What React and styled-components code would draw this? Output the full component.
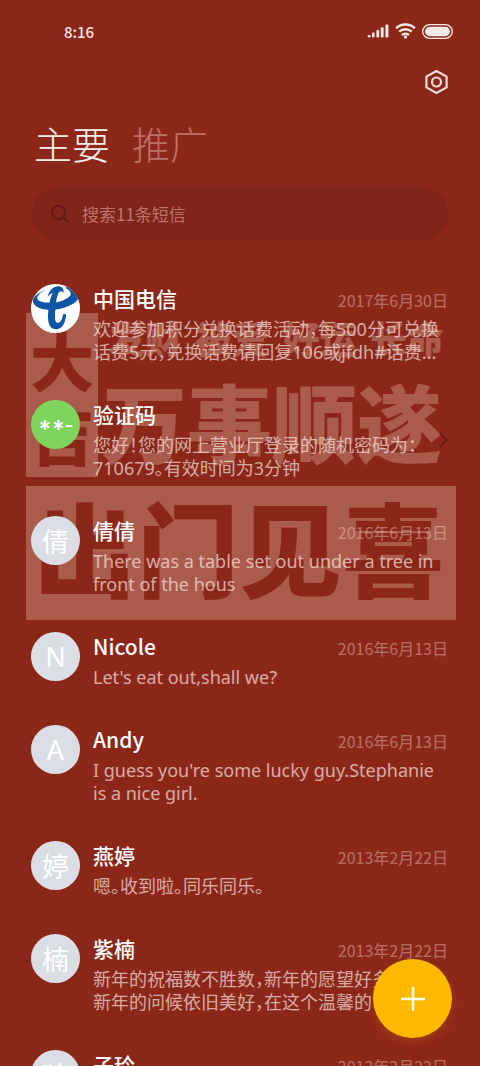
import styled, { createGlobalStyle } from "styled-components";

const GlobalStyle = createGlobalStyle`
  * {
    box-sizing: border-box;
  }
  body {
    margin: 0;
    background: #8b2719;
    color: #fff;
    font-family: "Noto Sans CJK SC", sans-serif;
    font-feature-settings: "halt";
  }
  button {
    padding: 0;
    border: 0;
    background: none;
    color: inherit;
    font: inherit;
    cursor: pointer;
  }
`;

const Page = styled.div`
  position: relative;
  height: 100vh;
  overflow: hidden;
`;

const StatusBar = styled.header`
  display: flex;
  align-items: center;
  justify-content: space-between;
  height: 62px;
  padding: 0 27px 0 64px;
  color: #f8e9e6;
`;

const Clock = styled.time`
  font-size: 15px;
  font-weight: 500;
`;

const StatusIcons = styled.div`
  display: flex;
  align-items: center;
  gap: 6px;
`;

const Toolbar = styled.div`
  display: flex;
  justify-content: flex-end;
  padding: 7px 31px 0;
`;

const IconButton = styled.button`
  display: flex;
`;

const Tabs = styled.nav`
  display: flex;
  gap: 22px;
  height: 92px;
  padding: 20px 34px 0;
`;

const Tab = styled.button`
  height: 56px;
  font-size: 38px;
  font-weight: 300;
  line-height: 56px;
  color: ${(props) => (props.$active ? "#fbeeeb" : "#bd7268")};
`;

const SearchBox = styled.label`
  display: flex;
  align-items: center;
  gap: 12px;
  height: 53px;
  margin: 0 32px;
  padding: 0 18px;
  border-radius: 27px;
  background: #802318;
`;

const SearchInput = styled.input`
  flex: 1;
  min-width: 0;
  padding: 0;
  border: 0;
  outline: 0;
  background: none;
  color: #fff;
  font: inherit;
  font-size: 17px;

  &::placeholder {
    color: #bb766c;
    opacity: 1;
  }
`;

const Body = styled.main`
  position: relative;
  padding-top: 44px;
`;

const Wallpaper = styled.div`
  position: absolute;
  top: 73px;
  left: 26px;
  right: 24px;
  display: grid;
  grid-template-columns: 72px 1fr;
  row-gap: 9px;
  color: #ab5b4b;
  font-weight: 900;
  user-select: none;
`;

const Seal = styled.div`
  display: flex;
  flex-direction: column;
  justify-content: center;
  height: 164px;
  background: #ab5b4b;
  color: #8b2719;
  font-size: 64px;
  line-height: 74px;
  text-align: center;
`;

const Wishes = styled.div`
  padding: 0 12px 0 4px;
`;

const SmallWish = styled.div`
  display: flex;
  justify-content: space-between;
  padding-left: 6px;
  font-size: 37px;
  line-height: 50px;
`;

const BigWish = styled.div`
  display: flex;
  justify-content: space-between;
  height: 114px;
  font-size: 85px;
  line-height: 114px;
  white-space: nowrap;
`;

const Banner = styled.div`
  grid-column: 1 / 3;
  display: flex;
  justify-content: space-between;
  height: 134px;
  padding: 0 12px 0 8px;
  background: #ab5b4b;
  color: #8b2719;
  font-size: 102px;
  line-height: 120px;
`;

const List = styled.ul`
  position: relative;
  margin: 0;
  padding: 0 32px 0 31px;
  list-style: none;
`;

const Row = styled.li`
  display: flex;
  gap: 13px;
  padding-bottom: 36px;
`;

const Avatar = styled.div`
  display: flex;
  align-items: center;
  justify-content: center;
  flex: none;
  width: 49px;
  height: 49px;
  border-radius: 50%;
  overflow: hidden;
  background: ${(props) => props.$color || "#dbdfe5"};
  font-family: "Noto Sans", "Noto Sans CJK SC", sans-serif;
  font-size: 27px;
`;

const Mask = styled.span`
  font-family: "DejaVu Sans", sans-serif;
  font-size: 16px;
  font-weight: 700;
`;

const Content = styled.div`
  flex: 1;
  min-width: 0;
`;

const RowHead = styled.div`
  display: flex;
  align-items: flex-start;
  justify-content: space-between;
  height: 30px;
  margin-bottom: 4px;
`;

const Name = styled.h2`
  margin: 0;
  font-size: 21px;
  font-weight: 500;
  line-height: 28px;
`;

const DateText = styled.time`
  color: rgba(255, 228, 224, 0.4);
  font-size: 16px;
  line-height: 32px;
`;

const Preview = styled.p`
  margin: 0;
  color: rgba(255, 238, 234, 0.68);
  font-family: "Noto Sans", "Noto Sans CJK SC", sans-serif;
  font-size: 18px;
  line-height: 23px;
  white-space: pre;
`;

const Chevron = styled.svg`
  flex: none;
  align-self: center;
`;

const AddButton = styled.button`
  position: fixed;
  right: 28px;
  bottom: 28px;
  display: flex;
  align-items: center;
  justify-content: center;
  width: 79px;
  height: 79px;
  border-radius: 50%;
  background: #ffb900;
  box-shadow: 0 4px 10px rgba(255, 150, 0, 0.2);
`;

function SignalIcon() {
  return (
    <svg width="22" height="14" viewBox="0 0 22 14" fill="currentColor">
      <rect x="0.6" y="11" width="3" height="2.6" rx="1" />
      <rect x="5" y="8.6" width="2.6" height="5" rx="1" />
      <rect x="9.4" y="6" width="2.8" height="7.6" rx="1" />
      <rect x="13.8" y="3.2" width="2.8" height="10.4" rx="1" />
      <rect x="18.4" y="0.4" width="3" height="13.2" rx="1" />
    </svg>
  );
}

function WifiIcon() {
  return (
    <svg width="21" height="16" viewBox="0 0 21 16" fill="none" stroke="currentColor">
      <path d="M1.2 5.2a13.6 13.6 0 0 1 18.6 0" strokeWidth="2.6" />
      <path d="M4.2 8.7a9.2 9.2 0 0 1 12.6 0" strokeWidth="2.4" />
      <path d="M7 12a5.2 5.2 0 0 1 7 0" strokeWidth="2.4" />
      <circle cx="10.5" cy="14" r="1.7" fill="currentColor" stroke="none" />
    </svg>
  );
}

function BatteryIcon() {
  return (
    <svg width="31" height="15" viewBox="0 0 31 15">
      <rect x="0.7" y="0.7" width="29.6" height="13.6" rx="6.8" fill="none" stroke="currentColor" strokeWidth="1.3" />
      <rect x="3" y="2.8" width="25" height="9.4" rx="4.7" fill="currentColor" />
    </svg>
  );
}

function SettingsIcon() {
  return (
    <svg width="25" height="26" viewBox="0 0 25 26" fill="none" stroke="#f3dcd8" strokeWidth="2.2">
      <path d="M12.5 2 22.6 7.6v10.8L12.5 24 2.4 18.4V7.6z" strokeLinejoin="round" />
      <circle cx="12.5" cy="13" r="4.5" />
    </svg>
  );
}

function SearchIcon() {
  return (
    <svg width="20" height="20" viewBox="0 0 20 20" fill="none" stroke="#5c1812" strokeWidth="1.8">
      <circle cx="8.5" cy="8.5" r="6.6" />
      <path d="M13.2 13.2 18.5 18" />
    </svg>
  );
}

function TelecomLogo() {
  return (
    <svg width="49" height="49" viewBox="93 42 147 147" fill="#0f55a5">
      <path d="M142 57C118 66 97 80 99 95c4 17 31 27 66 24 35-4 63-19 71-35l-8-16-23-16c-3-2-7 0-9 2 10 4 18 12 16 20-8 14-34 24-62 24-22 0-38-4-38-14s14-20 30-27z" />
      <path d="M143 80c5-20 17-30 32-31 11 0 17 7 16 19-5-6-11-6-15 0-8 17-10 42-11 67-1 17 3 25 11 23 8-3 12-13 13-25l9-1c0 23-10 46-30 46-18 0-25-18-24-43 1-25 6-50 14-67-6 2-11 7-15 12z" />
    </svg>
  );
}

const messages = [
  { name: "中国电信", date: "2017年6月30日", logo: true, lines: ["欢迎参加积分兑换话费活动，每500分可兑换", "话费5元，兑换话费请回复106或jfdh#话费..."] },
  { name: "验证码", mask: "∗∗–", color: "#7ed45c", lines: ["您好！您的网上营业厅登录的随机密码为：", "710679。有效时间为3分钟"] },
  { name: "倩倩", date: "2016年6月13日", avatar: "倩", lines: ["There was a table set out under a tree in", "front of the hous"] },
  { name: "Nicole", date: "2016年6月13日", avatar: "N", lines: ["Let's eat out,shall we?"] },
  { name: "Andy", date: "2016年6月13日", avatar: "A", lines: ["I guess you're some lucky guy.Stephanie", "is a nice girl."] },
  { name: "燕婷", date: "2013年2月22日", avatar: "婷", lines: ["嗯。收到啦。同乐同乐。"] },
  { name: "紫楠", date: "2013年2月22日", avatar: "楠", lines: ["新年的祝福数不胜数，新年的愿望好多", "新年的问候依旧美好，在这个温馨的日"] },
  { name: "子玲", date: "2013年2月22日", avatar: "玲", lines: [] },
];

function App() {
  return (
    <Page>
      <GlobalStyle />
      <StatusBar>
        <Clock>8:16</Clock>
        <StatusIcons>
          <SignalIcon />
          <WifiIcon />
          <BatteryIcon />
        </StatusIcons>
      </StatusBar>
      <Toolbar>
        <IconButton aria-label="设置">
          <SettingsIcon />
        </IconButton>
      </Toolbar>
      <Tabs>
        <Tab $active>主要</Tab>
        <Tab>推广</Tab>
      </Tabs>
      <SearchBox>
        <SearchIcon />
        <SearchInput aria-label="搜索" placeholder="搜索11条短信" />
      </SearchBox>
      <Body>
        <Wallpaper aria-hidden="true">
          <Seal>
            <span>大</span>
            <span>吉</span>
          </Seal>
          <Wishes>
            <SmallWish>
              <span>发财</span>
              <span>被爱</span>
              <span>好运</span>
              <span>长命</span>
            </SmallWish>
            <BigWish>
              <span>万事顺遂</span>
            </BigWish>
          </Wishes>
          <Banner>
            <span>出</span>
            <span>门</span>
            <span>见</span>
            <span>喜</span>
          </Banner>
        </Wallpaper>
        <List>
          {messages.map((message) => (
            <Row key={message.name}>
              <Avatar $color={message.logo ? "#fff" : message.color}>
                {message.logo && <TelecomLogo />}
                {message.mask && <Mask>{message.mask}</Mask>}
                {message.avatar}
              </Avatar>
              <Content>
                <RowHead>
                  <Name>{message.name}</Name>
                  {message.date && <DateText>{message.date}</DateText>}
                </RowHead>
                <Preview>{message.lines.join("\n")}</Preview>
              </Content>
              {!message.date && (
                <Chevron width="9" height="16" viewBox="0 0 9 16" fill="none" stroke="#5c1d16" strokeWidth="1.6">
                  <path d="M1 1l6.5 7L1 15" />
                </Chevron>
              )}
            </Row>
          ))}
        </List>
      </Body>
      <AddButton aria-label="新建短信">
        <svg width="26" height="26" viewBox="0 0 26 26" stroke="#fff" strokeWidth="2.4" strokeLinecap="round">
          <path d="M13 2v22M2 13h22" />
        </svg>
      </AddButton>
    </Page>
  );
}

export default App;
